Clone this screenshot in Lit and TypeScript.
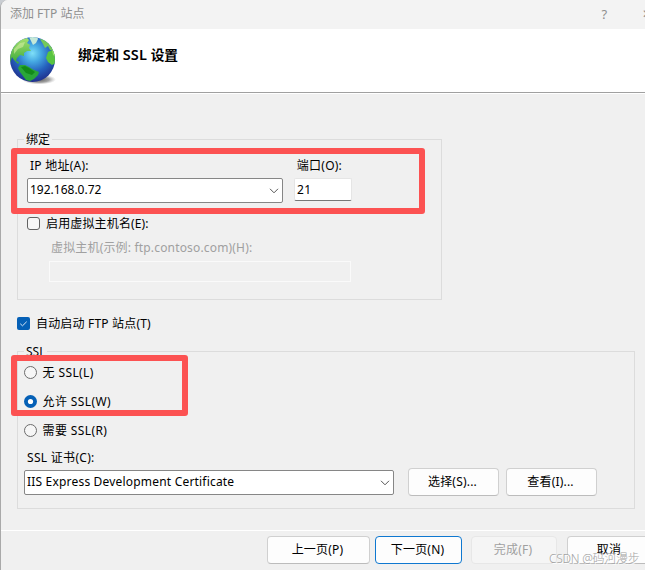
import { LitElement, html, css, svg } from "lit";
import { customElement, property } from "lit/decorators.js";

const globe = svg`
  <defs>
    <radialGradient id="sea" cx="0.5" cy="0.36" r="0.64">
      <stop offset="0" stop-color="#7fe0f8" />
      <stop offset="0.3" stop-color="#45a8e2" />
      <stop offset="0.65" stop-color="#2560bd" />
      <stop offset="1" stop-color="#202f8c" />
    </radialGradient>
    <radialGradient id="shade">
      <stop offset="0" stop-color="#444" stop-opacity="0.9" />
      <stop offset="0.6" stop-color="#666" stop-opacity="0.6" />
      <stop offset="1" stop-color="#999" stop-opacity="0" />
    </radialGradient>
    <linearGradient id="land" x1="0" y1="0" x2="0" y2="1">
      <stop offset="0" stop-color="#a4e070" />
      <stop offset="1" stop-color="#38a836" />
    </linearGradient>
    <clipPath id="disc"><circle cx="22.5" cy="22.5" r="22.5" /></clipPath>
  </defs>
  <ellipse cx="29" cy="42.5" rx="17" ry="5" fill="url(#shade)" />
  <circle cx="22.5" cy="22.5" r="22.5" fill="url(#sea)" />
  <g clip-path="url(#disc)">
    <path d="M0 26 L0 12 L8 3 L17 1 L19 3 L17 6 L20 8 L19 11 L21 14 L17 14 L14 16 L14 19 L10 18 L7 21 L6 24 L9 25 L8 27 L4 23 L2 20Z" fill="url(#land)" />
    <path d="M19 0 L27 0 L28 2 L26 6 L23 8 L21 4Z" fill="#c4e8d8" />
    <path d="M30 2 L37 3 L42 8 L44 13 L40 13 L38 9 L35 11 L33 7Z" fill="#74c95a" />
    <path d="M38 15 L42 13 L46 17 L46 26 L42 28 L38 25 L36 21Z" fill="#58c440" />
    <path d="M42 13 L46 15 L46 20 L43 18Z" fill="#9ade68" />
    <path d="M10 28 L15 28 L19 30 L22 32 L29 35 L28 38 L24 42 L20 44 L16 43 L13 39 L10 35 L8 31Z" fill="#2aa638" />
    <path d="M11 30 L15 29 L19 31 L25 35 L22 38 L16 36Z" fill="#138a1a" />
    <path d="M4 12 L10 6 L15 5 L13 10 L8 12 L4 17Z" fill="#d4eca0" opacity="0.6" />
  </g>
`;

@customElement("check-mark")
class CheckMark extends LitElement {
  @property({ type: Boolean }) checked = false;
  @property() kind = "box";
  static styles = css`
    :host { display: block; width: 13px; height: 13px; flex: none; }
    svg { display: block; }
  `;
  render() {
    if (this.kind === "radio") {
      return html`<svg width="13" height="13" viewBox="0 0 13 13">
        ${this.checked
          ? svg`<circle cx="6.5" cy="6.5" r="6.5" fill="#0560b6"/><circle cx="6.5" cy="6.5" r="2.6" fill="#fff"/>`
          : svg`<circle cx="6.5" cy="6.5" r="6" fill="#f6f6f6" stroke="#6c6c6c"/>`}
      </svg>`;
    }
    return html`<svg width="13" height="13" viewBox="0 0 13 13">
      ${this.checked
        ? svg`<rect width="13" height="13" rx="2" fill="#0560b6"/><path d="M3.3 6.8 L5.5 8.8 L9.7 4.7" fill="none" stroke="#d8e8f6" stroke-width="1"/>`
        : svg`<rect x="0.5" y="0.5" width="12" height="12" rx="2.5" fill="#f6f6f6" stroke="#626262"/>`}
    </svg>`;
  }
}

@customElement("combo-box")
class ComboBox extends LitElement {
  @property() value = "";
  static styles = css`
    :host {
      display: flex; align-items: center; justify-content: space-between;
      box-sizing: border-box; height: 25px; padding: 0 3px 2px 2px;
      border: 1px solid #868686; border-radius: 2px; background: #fff; flex: none;
    }
    svg { display: block; margin-top: 3px; }
  `;
  render() {
    return html`<span>${this.value}</span>
      <svg width="10" height="6" viewBox="0 0 10 6"><path d="M1 0.8 L5 4.8 L9 0.8" fill="none" stroke="#555" /></svg>`;
  }
}

@customElement("app-root")
class AppRoot extends LitElement {
  static styles = css`
    :host {
      display: block; position: relative; width: 645px; height: 570px; overflow: hidden;
      background: #c9cdd2; color: #000; white-space: nowrap;
      font: 12px/16px "Noto Sans", "Noto Sans CJK SC", sans-serif;
    }
    .window {
      display: flex; flex-direction: column; box-sizing: border-box; width: 660px; height: 580px;
      border-left: 1px solid #a9a9a9; border-top-left-radius: 8px; background: #f0f0f0; overflow: hidden;
    }
    .title { display: flex; align-items: center; height: 29px; flex: none; background: #f3f3f3; color: #8f8f8f; padding: 0 0 1px 9px; box-sizing: border-box; }
    .help { margin-left: 517px; font-size: 13px; }
    .close { margin-left: 35px; }
    .header { display: flex; height: 63px; flex: none; background: #fff; border-bottom: 1px solid #a0a0a0; box-shadow: 0 1px #fff; padding-left: 9px; box-sizing: content-box; }
    .globe { margin-top: 8px; flex: none; }
    h1 { font-size: 13.7px; line-height: 18px; font-weight: 700; margin: 17px 0 0 21px; }
    .latin { font-size: 14.5px; line-height: 14px; font-weight: 600; letter-spacing: 0.2px; }
    .body { display: flex; flex-direction: column; height: 437px; flex: none; box-sizing: border-box; padding: 46px 0 0 16px; }
    .group { box-sizing: border-box; border: 1px solid #dcdcdc; flex: none; }
    .binding { width: 425px; height: 161px; }
    .ssl { width: 618px; height: 158px; margin-top: 18px; }
    .legend { width: fit-content; height: 16px; line-height: 18px; margin: -9px 0 0 6px; padding: 0 2px; background: #f0f0f0; }
    .row { display: flex; align-items: center; height: 20px; gap: 6px; letter-spacing: 0.15px; }
    .labels { margin: 9px 0 0 12px; gap: 0; letter-spacing: 0.25px; }
    .port-label { margin-left: 208px; }
    .inputs { display: flex; margin: 2px 0 0 9px; gap: 11px; }
    .ip { width: 256px; }
    .port { box-sizing: border-box; width: 58px; height: 23px; padding: 3px 2px; background: #fff; border: 1px solid #e5e5e5; border-bottom-color: #777; border-radius: 2px; letter-spacing: 0.3px; }
    .host-check { margin: 10px 0 0 9px; }
    .host-check span, .auto span { padding-top: 1px; }
    .host-label { margin: 5px 0 0 33px; color: #a0a0a0; letter-spacing: 0.17px; }
    .host-field { box-sizing: border-box; width: 302px; height: 21px; margin: 3px 0 0 31px; border: 1px solid #fafafa; }
    .auto { margin-top: 13px; flex: none; letter-spacing: 0.18px; }
    .radios { margin: -1px 0 0 6px; }
    .radios .row { height: 29px; gap: 5.5px; letter-spacing: 0.4px; }
    .cert-label { margin: 3px 0 0 9px; letter-spacing: 0.3px; }
    .cert { display: flex; margin-left: 6px; }
    .cert combo-box { width: 370px; margin: 2px 14px 0 0; letter-spacing: 0.19px; }
    .button { display: flex; align-items: center; justify-content: center; box-sizing: border-box; height: 28px; width: 91px; padding-right: 2px; letter-spacing: 0.2px; border: 1px solid #d0d0d0; border-bottom-color: #bcbcbc; border-radius: 4px; background: #fdfdfd; flex: none; }
    .view { margin-left: 7px; }
    .footer { display: flex; border-top: 1px solid #fff; padding: 5px 0 0 266px; height: 40px; }
    .prev { width: 103px; }
    .next { width: 87px; margin-left: 5px; border-color: #0f78d0; }
    .done { width: 86px; margin-left: 9px; color: #a0a0a0; border-color: #e7e7e7; background: #f5f5f5; }
    .cancel { width: 86px; margin-left: 10px; }
    .mark { position: absolute; box-sizing: border-box; border: 6px solid #fc5252; border-radius: 3px; }
    .mark-binding { left: 11px; top: 148px; width: 414px; height: 66px; }
    .mark-ssl { left: 11px; top: 355px; width: 177px; height: 61px; }
    .watermark { position: absolute; left: 549px; top: 551px; color: #a2a2a2; font-weight: 300; letter-spacing: -0.25px; text-shadow: 1px 1px #fff; }
  `;

  render() {
    return html`
      <div class="window">
        <div class="title"><span class="caption">添加 FTP 站点</span><span class="help">?</span><span class="close">✕</span></div>
        <div class="header">
          <svg class="globe" width="47" height="48" viewBox="0 0 47 48">${globe}</svg>
          <h1>绑定和 <span class="latin">SSL</span> 设置</h1>
        </div>
        <div class="body">
          <div class="group binding">
            <div class="legend">绑定</div>
            <div class="row labels"><span>IP 地址(A):</span><span class="port-label">端口(O):</span></div>
            <div class="inputs"><combo-box class="ip" value="192.168.0.72"></combo-box><div class="port">21</div></div>
            <div class="row host-check"><check-mark></check-mark><span>启用虚拟主机名(E):</span></div>
            <div class="row host-label"><span>虚拟主机(示例: ftp.contoso.com)(H):</span></div>
            <div class="host-field"></div>
          </div>
          <div class="row auto"><check-mark checked></check-mark><span>自动启动 FTP 站点(T)</span></div>
          <div class="group ssl">
            <div class="legend">SSL</div>
            <div class="radios">
              <div class="row"><check-mark kind="radio"></check-mark><span>无 SSL(L)</span></div>
              <div class="row"><check-mark kind="radio" checked></check-mark><span>允许 SSL(W)</span></div>
              <div class="row"><check-mark kind="radio"></check-mark><span>需要 SSL(R)</span></div>
            </div>
            <div class="row cert-label"><span>SSL 证书(C):</span></div>
            <div class="cert">
              <combo-box value="IIS Express Development Certificate"></combo-box>
              <div class="button">选择(S)...</div>
              <div class="button view">查看(I)...</div>
            </div>
          </div>
        </div>
        <div class="footer">
          <div class="button prev">上一页(P)</div>
          <div class="button next">下一页(N)</div>
          <div class="button done">完成(F)</div>
          <div class="button cancel">取消</div>
        </div>
      </div>
      <div class="mark mark-binding"></div>
      <div class="mark mark-ssl"></div>
      <div class="watermark">CSDN @码河漫步</div>
    `;
  }
}
